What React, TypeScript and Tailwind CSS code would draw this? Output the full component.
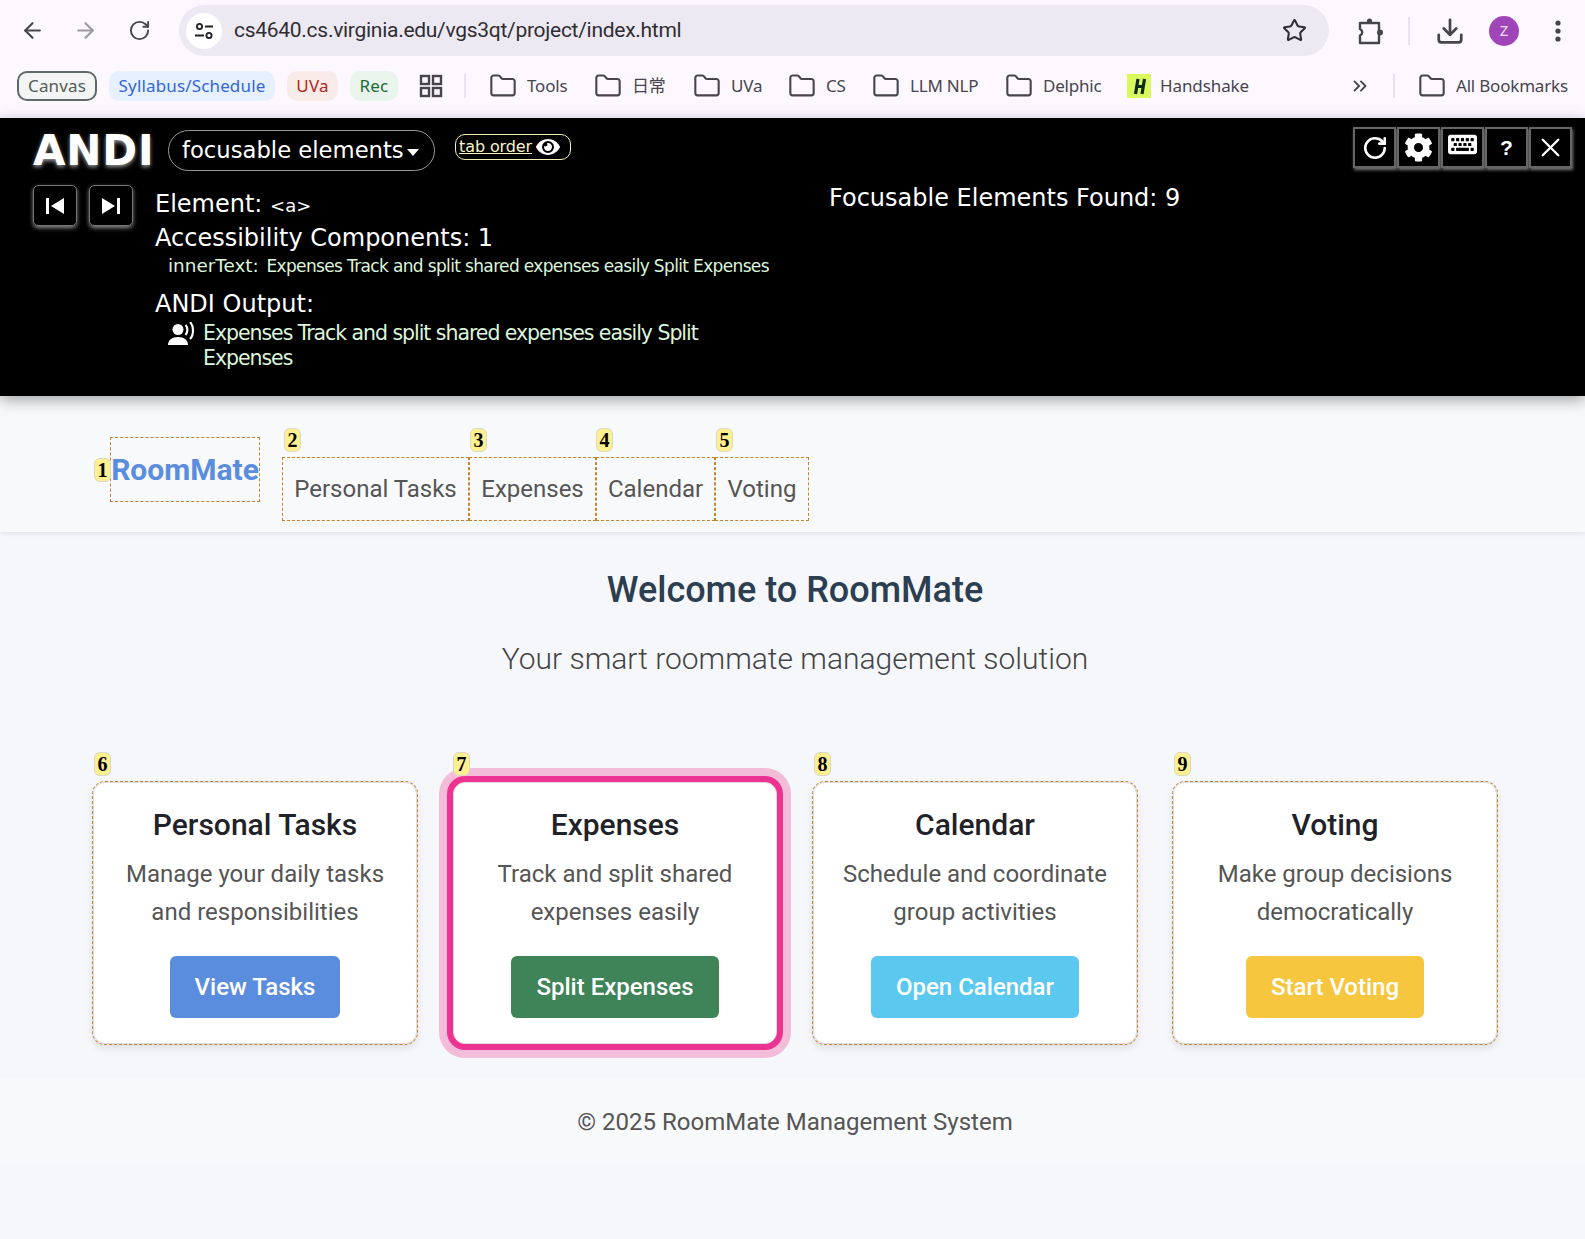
import React from "react";
import { ArrowLeft, ArrowRight, RotateCw, Star, Download, Folder, ChevronsRight, RotateCw as Redo, X } from "lucide-react";
import { FaCog, FaKeyboard, FaEye } from "react-icons/fa";

const chromeFont = { fontFamily: "'Noto Sans', 'Noto Sans CJK SC', sans-serif" };

function Badge({ n, className }: { n: number; className: string }) {
  return (
    <span className={`absolute flex h-[24px] w-[17px] items-center justify-center rounded-[6px] border border-[#d8d8c8] bg-[#fff08f] font-['Liberation_Serif',serif] text-[20px] font-bold leading-none text-black ${className}`}>
      {n}
    </span>
  );
}

function Mark({ children, className = "" }: { children: React.ReactNode; className?: string }) {
  return <span className={`flex h-[30px] items-center justify-center rounded-[10px] text-[17px] tracking-[0.15px] ${className}`}>{children}</span>;
}

function FolderMark({ label, className = "" }: { label: string; className?: string }) {
  return (
    <span className={`flex items-center gap-[10px] text-[17px] tracking-[-0.2px] text-[#47454c] ${className}`}>
      <Folder size={28} strokeWidth={1.8} className="text-[#47454c]" />
      {label}
    </span>
  );
}

function AndiBox({ children }: { children: React.ReactNode }) {
  return <div className="flex h-[41px] w-[44px] items-center justify-center rounded-[5px] border border-[#777] text-white shadow-[0_2px_4px_#888]">{children}</div>;
}

function TopBox({ children }: { children: React.ReactNode }) {
  return <div className="flex h-[41px] w-[43px] items-center justify-center border-2 border-[#666] bg-black text-white shadow-[1px_2px_3px_#777]">{children}</div>;
}

function Card({ n, title, desc1, desc2, btn, color, focused, badgeLeft }: { n: number; title: string; desc1: string; desc2: string; btn: string; color: string; focused?: boolean; badgeLeft: string }) {
  return (
    <div className={`relative flex h-[262px] flex-col items-center rounded-[12px] border border-[#ddd] bg-white pt-[23px] ${focused ? "shadow-[0_0_0_6px_#ec3392,0_0_0_14px_#f3bcd9]" : "outline-1 outline-dashed outline-[#c8822c] shadow-[0_4px_8px_rgba(0,0,0,0.1)]"}`}>
      <Badge n={n} className={`${badgeLeft} top-[-31px] z-10`} />
      <h2 className="text-[30px] font-medium leading-[38px] text-[#1f2329]">{title}</h2>
      <p className="mt-[11px] text-center text-[24px] leading-[38px] text-[#555]">{desc1}<br />{desc2}</p>
      <span className={`mt-[25px] flex h-[62px] items-center rounded-[6px] px-[25px] text-[24px] font-medium text-white ${color}`}>{btn}</span>
    </div>
  );
}

export default function App() {
  return (
    <div className="flex min-h-[1239px] w-[1585px] flex-col overflow-hidden bg-[#f5f7fa] font-['Roboto',sans-serif]">
      <header className="flex h-[118px] flex-col bg-[#fdf8ff]" style={chromeFont}>
        <div className="flex h-[61px] items-center text-[#47454c]">
          <ArrowLeft size={25} strokeWidth={2} className="ml-[20px]" />
          <ArrowRight size={25} strokeWidth={2} className="ml-[28px] text-[#9b999f]" />
          <RotateCw size={23} strokeWidth={2} className="ml-[30px]" />
          <div className="ml-[28px] flex h-[51px] w-[1150px] items-center rounded-full bg-[#ede9f2] pl-[7px] pr-[22px]">
            <span className="flex h-[36px] w-[36px] items-center justify-center rounded-full bg-white">
              <svg width="22" height="22" viewBox="0 0 22 22" fill="none" stroke="#1f1f22" strokeWidth="1.8"><circle cx="6.5" cy="6.5" r="2.6" /><path d="M12 6.5h8M2 15.5h9" /><circle cx="16" cy="15.5" r="2.6" /></svg>
            </span>
            <span className="ml-[12px] font-['Roboto',sans-serif] text-[21px] tracking-[-0.28px] text-[#302e33]">cs4640.cs.virginia.edu/vgs3qt/project/index.html</span>
            <Star size={25} strokeWidth={2} className="ml-auto text-[#302e33]" />
          </div>
          <svg width="26" height="28" viewBox="0 0 26 28" fill="none" stroke="#47454c" strokeWidth="2.4" strokeLinejoin="round" className="ml-[28px]">
            <path d="M3 6h19v20H3v-7.5c3-1.5 3-5 0-6.5z" />
            <circle cx="12.5" cy="4" r="2.6" fill="#47454c" stroke="none" />
            <circle cx="23" cy="15.5" r="3" fill="#47454c" stroke="none" />
          </svg>
          <span className="ml-[25px] h-[28px] w-[2px] bg-[#e6e2f5]" />
          <Download size={30} strokeWidth={2.2} className="ml-[25px]" />
          <span className="ml-[24px] flex h-[30px] w-[30px] items-center justify-center rounded-full bg-[#a045b8] text-[15px] text-[#f0dcf5]">Z</span>
          <svg width="6" height="24" viewBox="0 0 6 24" fill="#47454c" className="ml-[36px]"><circle cx="3" cy="4" r="2.6" /><circle cx="3" cy="12" r="2.6" /><circle cx="3" cy="20" r="2.6" /></svg>
        </div>
        <div className="mt-[10px] flex h-[29px] items-center">
          <Mark className="ml-[17px] w-[80px] rounded-[8px] border-2 border-[#5f6a68] bg-[#f2f5f3] text-[#555b5a]">Canvas</Mark>
          <Mark className="ml-[12px] w-[166px] bg-[#e6f0ff] text-[#3367d6]">Syllabus/Schedule</Mark>
          <Mark className="ml-[12px] w-[51px] bg-[#f9ebe8] text-[#b3261e]">UVa</Mark>
          <Mark className="ml-[12px] w-[48px] bg-[#e8f4ec] text-[#1e6b34]">Rec</Mark>
          <svg width="24" height="24" viewBox="0 0 24 24" fill="none" stroke="#47454c" strokeWidth="2.4" className="ml-[21px]"><rect x="2" y="2" width="8" height="8" /><rect x="14" y="2" width="8" height="8" /><rect x="2" y="14" width="8" height="8" /><rect x="14" y="14" width="8" height="8" /></svg>
          <span className="ml-[21px] h-[24px] w-[2px] bg-[#e6e2f5]" />
          <FolderMark label="Tools" className="ml-[23px] w-[105px]" />
          <FolderMark label="日常" className="w-[99px]" />
          <FolderMark label="UVa" className="w-[95px]" />
          <FolderMark label="CS" className="w-[84px]" />
          <FolderMark label="LLM NLP" className="w-[133px]" />
          <FolderMark label="Delphic" className="w-[120px]" />
          <span className="flex w-[224px] items-center">
            <svg width="24" height="24" viewBox="0 0 24 24" className="ml-[2px] bg-[#d9f95f]" fill="none" stroke="#0f2a1c" strokeWidth="3.2"><path d="M8.5 20 11 5M15 20 17.5 5M9.5 12.5h7" /></svg>
            <span className="ml-[9px] text-[17px] tracking-[-0.1px] text-[#47454c]">Handshake</span>
          </span>
          <ChevronsRight size={22} strokeWidth={2} className="text-[#47454c]" />
          <span className="ml-[22px] h-[24px] w-[2px] bg-[#e6e2f5]" />
          <FolderMark label="All Bookmarks" className="ml-[23px] whitespace-nowrap" />
        </div>
      </header>

      <section className="relative z-10 flex h-[278px] bg-black font-['DejaVu_Sans',sans-serif] text-white shadow-[0_4px_14px_rgba(0,0,0,0.35)]">
        <div className="flex w-[820px] flex-col pl-[33px] pt-[12px]">
          <div className="flex items-start">
            <span className="mt-[1px] w-[119px] text-[42px] font-bold leading-[40px] tracking-[0.8px] [text-shadow:0_2px_4px_#999]">ANDI</span>
            <span className="ml-[16px] flex h-[41px] w-[267px] items-center rounded-full border border-[#999] pl-[13px] text-[22.7px] leading-none">focusable elements<span className="ml-[3px] mt-[3px] border-x-[6px] border-t-[7px] border-x-transparent border-t-white" /></span>
            <span className="ml-[20px] mt-[4px] flex h-[26px] w-[116px] items-center gap-[4px] rounded-[10px] border border-[#f5efb8] pl-[3px] text-[16px] tracking-[-0.1px] text-[#f8f3c8] underline">tab order<FaEye size={24} className="text-white" /></span>
          </div>
          <div className="mt-[14px] flex">
            <div className="flex gap-[12px]">
              <AndiBox><svg width="18" height="16" viewBox="0 0 18 16" fill="#fff"><rect x="0" y="0" width="3" height="16" /><path d="M18 0v16L5 8z" /></svg></AndiBox>
              <AndiBox><svg width="18" height="16" viewBox="0 0 18 16" fill="#fff"><rect x="15" y="0" width="3" height="16" /><path d="M0 0v16l13-8z" /></svg></AndiBox>
            </div>
            <div className="ml-[22px] mt-[2px] flex flex-col">
              <div className="mb-[-2px] text-[24px] leading-[34px]">Element: <span className="text-[18px]">&lt;a&gt;</span></div>
              <div className="text-[24px] leading-[34px]">Accessibility Components: 1</div>
              <div className="ml-[13px] text-[17px] leading-[22px] tracking-[-0.65px] text-[#dcf5dc]"><span className="mr-[3px] text-[18.4px] tracking-normal">innerText:</span> Expenses Track and split shared expenses easily Split Expenses</div>
              <div className="mt-[10px] text-[24px] leading-[34px]">ANDI Output:</div>
              <div className="ml-[13px] flex items-start text-[#dcf5dc]">
                <svg width="28" height="24" viewBox="0 0 28 24" fill="#fff" className="mt-[1px]"><circle cx="10" cy="7.5" r="5.5" /><path d="M0 23c0-5 4-8 10-8s10 3 10 8z" /><path d="M17.5 3c2.5 2.5 2.5 7.5 0 10M22 0c4 4 4 13 0 17" fill="none" stroke="#fff" strokeWidth="2.2" /></svg>
                <p className="ml-[7px] w-[510px] text-[20.5px] leading-[25px] tracking-[-1.05px]">Expenses Track and split shared expenses easily Split Expenses</p>
              </div>
            </div>
          </div>
        </div>
        <div className="pl-[9px] pt-[63px] text-[24px] leading-[34px]">Focusable Elements Found: 9</div>
        <div className="absolute right-[13px] top-[9px] flex gap-[1px]">
          <TopBox><Redo size={26} strokeWidth={2.4} /></TopBox>
          <TopBox><FaCog size={29} /></TopBox>
          <TopBox><FaKeyboard size={29} className="mb-[6px]" /></TopBox>
          <TopBox><span className="font-['Liberation_Sans',sans-serif] text-[21px] font-bold">?</span></TopBox>
          <TopBox><X size={31} strokeWidth={1.8} /></TopBox>
        </div>
      </section>

      <nav className="flex h-[136px] items-start bg-[#f8f9fa] pl-[110px] pt-[41px] text-[#555] shadow-[0_2px_4px_rgba(0,0,0,0.08)]">
        <a className="relative flex h-[65px] w-[150px] items-center justify-center border border-dashed border-[#c8822c] text-[30px] font-bold text-[#5b8dde]">
          <Badge n={1} className="left-[-17px] top-[20px]" />
          RoomMate
        </a>
        <div className="ml-[22px] mt-[20px] flex h-[64px] text-[24px]">
          <a className="relative flex w-[187px] items-center justify-center border border-dashed border-[#c8822c]"><Badge n={2} className="left-px top-[-30px]" />Personal Tasks</a>
          <a className="relative flex w-[127px] items-center justify-center border border-dashed border-[#c8822c]"><Badge n={3} className="left-0 top-[-30px]" />Expenses</a>
          <a className="relative flex w-[119px] items-center justify-center border border-dashed border-[#c8822c]"><Badge n={4} className="left-[-1px] top-[-30px]" />Calendar</a>
          <a className="relative flex w-[94px] items-center justify-center border border-dashed border-[#c8822c]"><Badge n={5} className="left-0 top-[-30px]" />Voting</a>
        </div>
      </nav>

      <main className="flex flex-col pl-[93px] pr-[88px]">
        <h1 className="mt-[34px] text-center text-[36px] font-medium leading-[48px] text-[#2c3e50]">Welcome to RoomMate</h1>
        <p className="mt-[23px] text-center text-[30px] font-light leading-[44px] text-[#444]">Your smart roommate management solution</p>
        <div className="mt-[101px] grid grid-cols-4 gap-[36px]">
          <Card n={6} title="Personal Tasks" desc1="Manage your daily tasks" desc2="and responsibilities" btn="View Tasks" color="bg-[#5b8dde]" badgeLeft="left-0" />
          <Card n={7} title="Expenses" desc1="Track and split shared" desc2="expenses easily" btn="Split Expenses" color="bg-[#3f8458]" focused badgeLeft="left-[-1px]" />
          <Card n={8} title="Calendar" desc1="Schedule and coordinate" desc2="group activities" btn="Open Calendar" color="bg-[#5bc8ef]" badgeLeft="left-0" />
          <Card n={9} title="Voting" desc1="Make group decisions" desc2="democratically" btn="Start Voting" color="bg-[#f6c63f]" badgeLeft="left-0" />
        </div>
      </main>

      <footer className="mt-[34px] flex h-[87px] items-center bg-[#f8f9fa] pl-[93px] pr-[88px]">
        <p className="w-full text-center text-[24px] text-[#555]">© 2025 RoomMate Management System</p>
      </footer>
    </div>
  );
}
